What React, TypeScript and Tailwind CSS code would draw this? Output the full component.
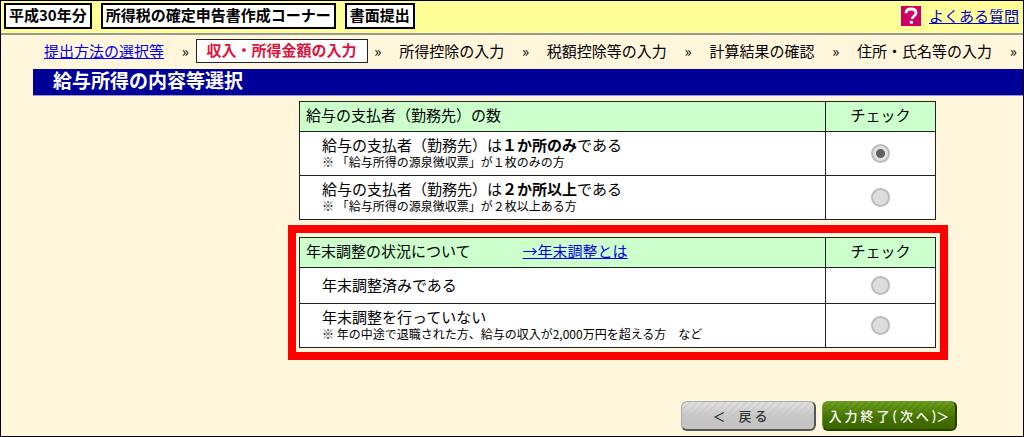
import { useState } from 'react';

interface Choice {
  id: string;
  lead: string;
  strong?: string;
  tail?: string;
  note?: string;
}

interface ChoiceTableProps {
  name: string;
  heading: string;
  link?: string;
  choices: Choice[];
  selected: string;
  onSelect: (id: string) => void;
}

const TAGS = ['平成30年分', '所得税の確定申告書作成コーナー', '書面提出'];

const STEPS = [
  { label: '提出方法の選択等', state: 'done' },
  { label: '収入・所得金額の入力', state: 'current' },
  { label: '所得控除の入力', state: 'todo' },
  { label: '税額控除等の入力', state: 'todo' },
  { label: '計算結果の確認', state: 'todo' },
  { label: '住所・氏名等の入力', state: 'todo' },
];

const EMPLOYER_CHOICES: Choice[] = [
  {
    id: 'employer-one',
    lead: '給与の支払者（勤務先）は',
    strong: '１か所のみ',
    tail: 'である',
    note: '※ 「給与所得の源泉徴収票」が１枚のみの方',
  },
  {
    id: 'employer-many',
    lead: '給与の支払者（勤務先）は',
    strong: '２か所以上',
    tail: 'である',
    note: '※ 「給与所得の源泉徴収票」が２枚以上ある方',
  },
];

const ADJUSTMENT_CHOICES: Choice[] = [
  { id: 'adjustment-done', lead: '年末調整済みである' },
  {
    id: 'adjustment-none',
    lead: '年末調整を行っていない',
    note: '※ 年の中途で退職された方、給与の収入が2,000万円を超える方　など',
  },
];

function ChoiceTable({ name, heading, link, choices, selected, onSelect }: ChoiceTableProps) {
  return (
    <table className="w-full table-fixed border-collapse border border-[#222]">
      <thead>
        <tr className="h-[30px] bg-[#ccffcc]">
          <th className="border border-[#222] px-[6px] pb-[3px] text-left font-normal">
            {heading}
            {link && (
              <a href="#" className="ml-[52px] text-[#0000ee] underline">
                {link}
              </a>
            )}
          </th>
          <th className="w-[110px] border border-[#222] pb-[3px] font-normal">チェック</th>
        </tr>
      </thead>
      <tbody>
        {choices.map((choice) => (
          <tr key={choice.id} className={choice.note ? 'h-11 bg-white' : 'h-9 bg-white'}>
            <td className="border border-[#222] pb-[2px] pl-[22px]">
              <label htmlFor={choice.id} className="block">
                {choice.lead}
                {choice.strong && <b>{choice.strong}</b>}
                {choice.tail}
                {choice.note && <span className="block text-[12px] leading-[16px]">{choice.note}</span>}
              </label>
            </td>
            <td className="border border-[#222]">
              <input
                type="radio"
                id={choice.id}
                name={name}
                checked={selected === choice.id}
                onChange={() => onSelect(choice.id)}
                className="mx-auto block size-[19px] appearance-none rounded-full border-2 border-[#bbb] bg-[#dddddd] checked:bg-[radial-gradient(circle,#606060_4px,#e0e0e0_5px)]"
              />
            </td>
          </tr>
        ))}
      </tbody>
    </table>
  );
}

export default function App() {
  const [employer, setEmployer] = useState('employer-one');
  const [adjustment, setAdjustment] = useState('');

  return (
    <div className="flex min-h-screen flex-col border border-black bg-[#fff6dc] font-['Noto_Sans_CJK_JP',sans-serif] text-[15px] leading-[18px] text-black">
      {/* Header */}
      <header className="flex h-[34px] items-center justify-between border-b-2 border-[#999] bg-[#ffff99] pr-1 pb-[2px] pl-[3px]">
        <div className="flex gap-[9px]">
          {TAGS.map((tag) => (
            <span key={tag} className="border-2 border-black bg-white px-[3px] pt-px pb-[3px] font-bold whitespace-nowrap">
              {tag}
            </span>
          ))}
        </div>
        <div className="flex items-center gap-2">
          <svg viewBox="0 0 20 20" className="size-5" aria-hidden="true">
            <rect width="20" height="20" fill="#cc0066" />
            <path d="M5 7.2C5 4.2 7 3 10 3s5 1.400 5 4c0 3-3.800 3-3.800 6" fill="none" stroke="#fff" strokeWidth="2.800" />
            <rect x="8.800" y="14.800" width="3.200" height="2.800" fill="#fff" />
          </svg>
          <a href="#" className="text-[#0000cc] underline">
            よくある質問
          </a>
        </div>
      </header>

      {/* Steps */}
      <nav className="flex h-[34px] items-center justify-between pr-[6px] pb-[3px] pl-8 whitespace-nowrap">
        {STEPS.map((step) => (
          <div key={step.label} className="contents">
            {step.state === 'done' && (
              <a href="#" className="px-[11px] text-[#0000ee] underline">
                {step.label}
              </a>
            )}
            {step.state === 'current' && (
              <span className="border border-[#222] bg-white px-[10px] pt-px pb-[3px] font-bold text-[#dc143c]">
                {step.label}
              </span>
            )}
            {step.state === 'todo' && <span className="px-[11px]">{step.label}</span>}
            <span>»</span>
          </div>
        ))}
      </nav>

      <h1 className="ml-8 h-[27px] border-b border-[#9999cc] bg-[#000099] pl-5 text-[19px] leading-[22px] font-bold text-white">
        給与所得の内容等選択
      </h1>

      {/* Questions */}
      <main className="mt-[5px] mr-[75px] ml-[287px]">
        <div className="mr-3 ml-[11px]">
          <ChoiceTable
            name="employer"
            heading="給与の支払者（勤務先）の数"
            choices={EMPLOYER_CHOICES}
            selected={employer}
            onSelect={setEmployer}
          />
        </div>
        <div className="mt-[5px] border-8 border-[#ff0000] pt-1 pr-1 pb-1 pl-[3px]">
          <ChoiceTable
            name="adjustment"
            heading="年末調整の状況について"
            link="→年末調整とは"
            choices={ADJUSTMENT_CHOICES}
            selected={adjustment}
            onSelect={setAdjustment}
          />
        </div>
      </main>

      <footer className="mt-auto mr-[66px] mb-[5px] flex justify-end gap-[6px] text-[13px]">
        <button
          type="button"
          className="h-[30px] w-[135px] rounded-md border border-[#aaa] border-r-2 border-r-[#555] border-b-2 border-b-[#555] bg-[linear-gradient(transparent,#c4c4c4_60%),repeating-linear-gradient(135deg,#d2d2d2_0px,#d2d2d2_1px,#e0e0e0_2px,#e0e0e0_5px)] pr-4 font-medium text-[#333]"
        >
          ＜　戻 る
        </button>
        <button
          type="button"
          className="h-[30px] w-[135px] rounded-md border border-[#669933] border-r-2 border-r-[#224400] border-b-2 border-b-[#224400] bg-[linear-gradient(transparent,#447000_60%,#3c6600),repeating-linear-gradient(135deg,#5c8e10_0px,#5c8e10_1px,#6c9f1c_2px,#6c9f1c_5px)] font-medium text-white"
        >
          入 力 終 了 ( 次 へ )＞
        </button>
      </footer>
    </div>
  );
}
